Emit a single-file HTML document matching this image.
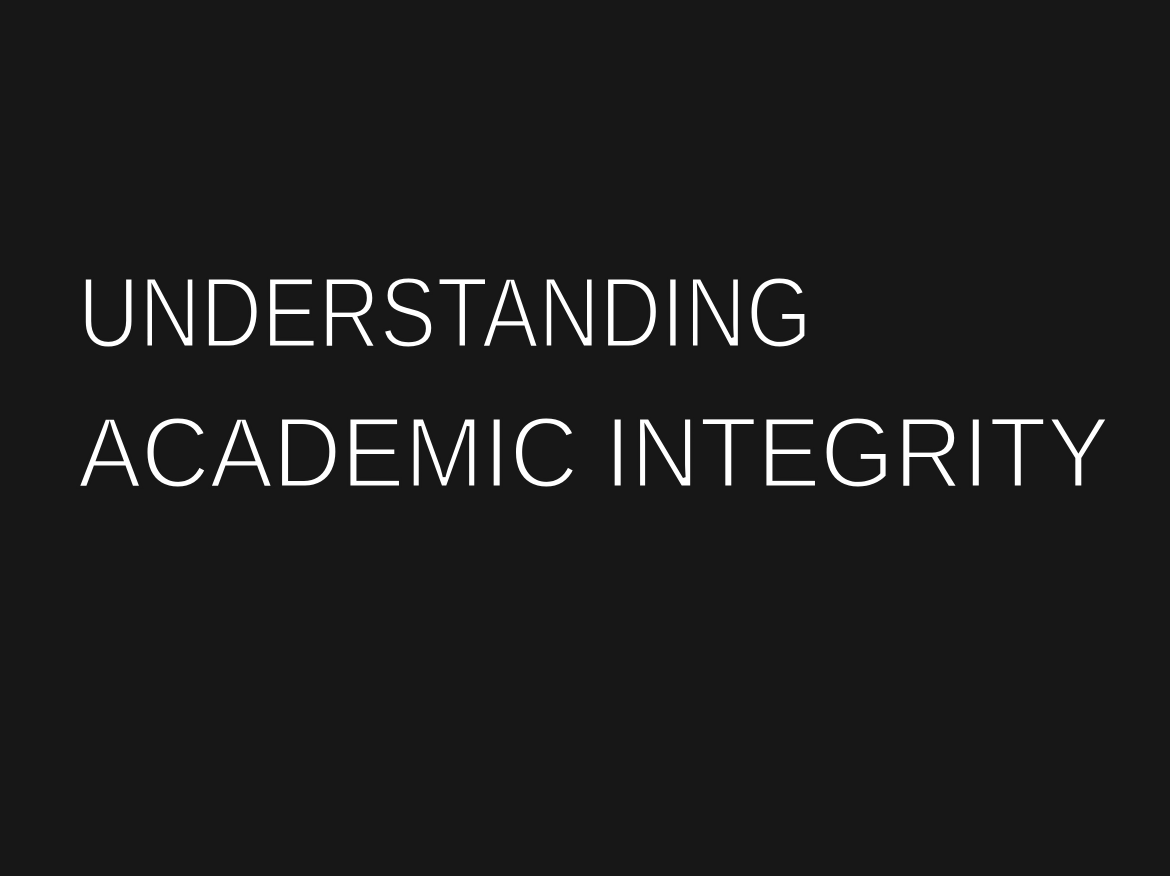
<!DOCTYPE html>
<html>
<head>
<meta charset="utf-8">
<style>
  html,body{margin:0;padding:0;background:#171717;width:1170px;height:876px;overflow:hidden;}
  svg{display:block;}
  text{font-family:"Liberation Sans",sans-serif;fill:#ffffff;font-size:100px;stroke:#171717;stroke-width:3px;paint-order:fill;}
</style>
</head>
<body>
<svg width="1170" height="876" viewBox="0 0 1170 876" xmlns="http://www.w3.org/2000/svg">
  <rect width="1170" height="876" fill="#171717"/>
  <text x="78" y="347" textLength="734" lengthAdjust="spacingAndGlyphs">UNDERSTANDING</text>
  <text x="78" y="487" textLength="1032" lengthAdjust="spacingAndGlyphs">ACADEMIC INTEGRITY</text>
</svg>
</body>
</html>
